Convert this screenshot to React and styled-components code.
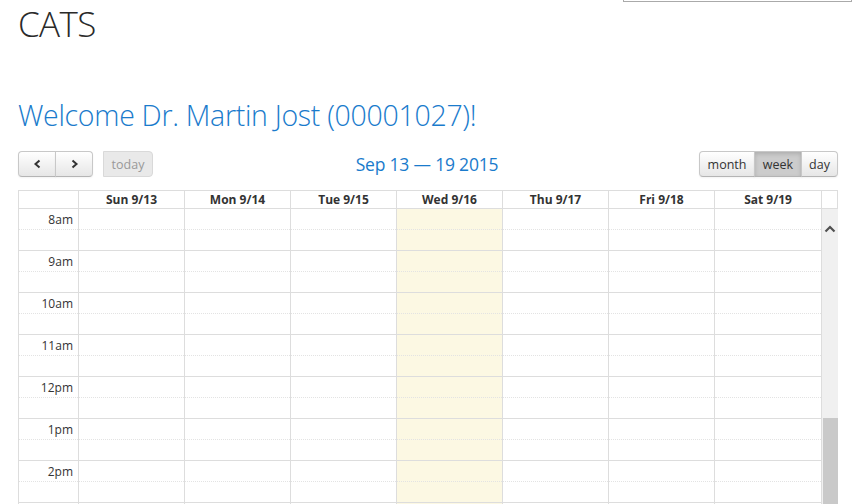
import React from "react";
import styled, { createGlobalStyle, css } from "styled-components";

const GlobalStyle = createGlobalStyle`
  html, body {
    margin: 0;
    padding: 0;
    background: #fff;
    overflow: hidden;
  }
  body {
    font-family: "Open Sans", "Noto Sans", sans-serif;
    color: #333;
  }
`;

const days = ["Sun 9/13", "Mon 9/14", "Tue 9/15", "Wed 9/16", "Thu 9/17", "Fri 9/18", "Sat 9/19"];
// the 3pm row starts at the very bottom edge, its label is out of view
const hours = ["8am", "9am", "10am", "11am", "12pm", "1pm", "2pm", ""];
const TODAY = 3;

const Page = styled.div`
  position: relative;
  height: 504px;
  padding: 0 16px 0 18px;
  overflow: hidden;
`;

const TopBox = styled.div`
  position: absolute;
  top: -10px;
  right: 2px;
  width: 227px;
  height: 10px;
  border: 1px solid #aaa;
`;

const Brand = styled.h1`
  margin: 0;
  padding-top: 2px;
  font-size: 35px;
  font-weight: 300;
  letter-spacing: -0.6px;
  color: #2a2a2a;
  line-height: 44px;
`;

const Welcome = styled.h2`
  margin: 51px 0 0;
  font-size: 28.5px;
  font-weight: 300;
  color: #1a7bcc;
  line-height: 36px;
  letter-spacing: -0.3px;
`;

const Toolbar = styled.div`
  display: grid;
  grid-template-columns: 1fr auto 1fr;
  align-items: center;
  margin-top: 18px;
  height: 26px;
`;

const Left = styled.div`
  display: flex;
  gap: 11px;
`;

const Right = styled.div`
  display: flex;
  justify-content: flex-end;
`;

const Group = styled.div`
  display: flex;
`;

const Btn = styled.button`
  height: 26px;
  padding: 0 8px;
  font-family: "Open Sans", sans-serif;
  font-size: 12.5px;
  color: #333;
  border: 1px solid #c8c8c8;
  border-bottom-color: #b4b4b4;
  background: linear-gradient(#ffffff, #e6e6e6);
  box-shadow: inset 0 1px 0 rgba(255, 255, 255, 0.2), 0 1px 2px rgba(0, 0, 0, 0.05);
  display: flex;
  align-items: center;
  justify-content: center;
  width: ${(p) => (p.$w ? `${p.$w}px` : "auto")};
  margin-left: -1px;
  &:first-child {
    margin-left: 0;
    border-radius: 4px 0 0 4px;
  }
  &:last-child {
    border-radius: 0 4px 4px 0;
  }
  ${(p) =>
    p.$active &&
    css`
      background: #cccccc;
      box-shadow: inset 0 2px 4px rgba(0, 0, 0, 0.15), 0 1px 2px rgba(0, 0, 0, 0.05);
    `}
  ${(p) =>
    p.$disabled &&
    css`
      border-radius: 4px;
      background: #e9e9e9;
      border-color: #d9d9d9;
      color: #999;
      box-shadow: none;
    `}
`;

const Title = styled.h2`
  margin: 0;
  font-size: 17.5px;
  font-weight: 400;
  color: #1a7bcc;
  letter-spacing: -0.2px;
  padding-right: 2px;
`;

const Calendar = styled.div`
  margin-top: 13px;
  border: 1px solid #ddd;
  border-bottom: none;
`;

const cols = "59px repeat(6, 106px) 107px 17px";

const HeadRow = styled.div`
  display: grid;
  grid-template-columns: ${cols};
  height: 17px;
  border-bottom: 1px solid #ddd;
`;

const HeadCell = styled.div`
  border-left: ${(p) => (p.$first ? "none" : "1px solid #ddd")};
  font-size: 12px;
  font-weight: 700;
  text-align: center;
  line-height: 17px;
  color: #333;
`;

const Body = styled.div`
  display: grid;
  grid-template-columns: ${cols};
`;

const AxisCol = styled.div`
  display: flex;
  flex-direction: column;
`;

const DayCol = styled.div`
  display: flex;
  flex-direction: column;
  border-left: 1px solid #ddd;
  background: ${(p) => (p.$today ? "#fcf8e3" : "transparent")};
`;

// top half of an hour ends in a dotted line, the bottom half in a solid one
const Slot = styled.div`
  height: 20px;
  border-bottom: 1px ${(p) => (p.$top ? "dotted #e3e3e3" : "solid #ddd")};
  font-size: 12px;
  text-align: right;
  padding-right: 5px;
  line-height: 21px;
  color: #333;
`;

const Scroll = styled.div`
  border-left: 1px solid #ddd;
  background: #f0f0f0;
  display: flex;
  flex-direction: column;
  align-items: center;
`;

const Arrow = styled.svg`
  margin-top: 16px;
`;

const Thumb = styled.div`
  margin-top: auto;
  width: 15px;
  height: 127px;
  background: #c9c9c9;
`;

const Chevron = ({ dir }) => (
  <svg width="9" height="10" viewBox="0 0 9 10">
    <path
      d={dir === "left" ? "M6.5 1.5 L2.5 5 L6.5 8.5" : "M2.5 1.5 L6.5 5 L2.5 8.5"}
      fill="none"
      stroke="#333"
      strokeWidth="2"
    />
  </svg>
);

const Slots = ({ label }) => (
  <>
    <Slot $top>{label}</Slot>
    <Slot />
  </>
);

export default function App() {
  return (
    <Page>
      <GlobalStyle />
      <TopBox />
      <Brand>CATS</Brand>
      <Welcome>Welcome Dr. Martin Jost (00001027)!</Welcome>
      <Toolbar>
        <Left>
          <Group>
            <Btn $w={38} aria-label="prev">
              <Chevron dir="left" />
            </Btn>
            <Btn $w={38} aria-label="next">
              <Chevron dir="right" />
            </Btn>
          </Group>
          <Btn $disabled $w={50}>
            today
          </Btn>
        </Left>
        <Title>Sep 13 — 19 2015</Title>
        <Right>
          <Group>
            <Btn $w={56}>month</Btn>
            <Btn $w={48} $active>
              week
            </Btn>
            <Btn $w={37}>day</Btn>
          </Group>
        </Right>
      </Toolbar>
      <Calendar>
        <HeadRow>
          <HeadCell $first />
          {days.map((d) => (
            <HeadCell key={d}>{d}</HeadCell>
          ))}
          <HeadCell />
        </HeadRow>
        <Body>
          <AxisCol>
            {hours.map((h, i) => (
              <Slots key={i} label={h} />
            ))}
          </AxisCol>
          {days.map((d, i) => (
            <DayCol key={d} $today={i === TODAY}>
              {hours.map((h, j) => (
                <Slots key={j} />
              ))}
            </DayCol>
          ))}
          <Scroll>
            <Arrow width="12" height="8" viewBox="0 0 12 8">
              <path d="M1.5 6.5 L6 2 L10.5 6.5" fill="none" stroke="#505050" strokeWidth="2.2" />
            </Arrow>
            <Thumb />
          </Scroll>
        </Body>
      </Calendar>
    </Page>
  );
}
